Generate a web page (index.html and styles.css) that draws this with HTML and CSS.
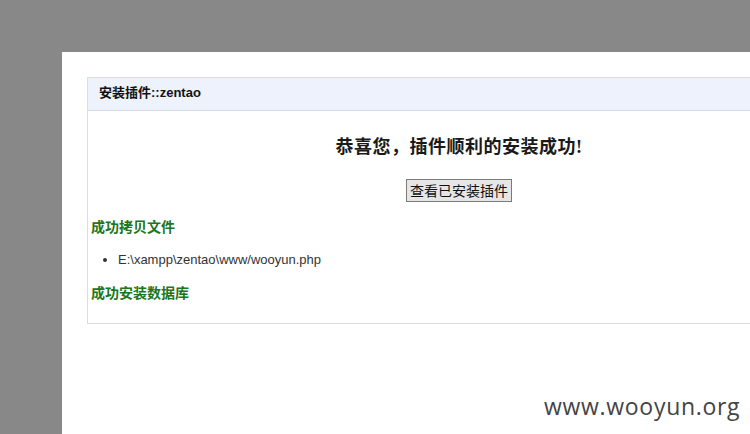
FILE: index.html
```html
<!DOCTYPE html>
<html>
<head>
<meta charset="utf-8">
<link rel="stylesheet" href="styles.css">
</head>
<body>
<div class="page">
  <div class="box">
    <div class="box-head">安装插件::zentao</div>
    <div class="box-body">
      <h3 class="title">恭喜您，插件顺利的安装成功!</h3>
      <div class="actions"><button class="btn">查看已安装插件</button></div>
      <h4 class="ok">成功拷贝文件</h4>
      <ul class="files">
        <li>E:\xampp\zentao\www/wooyun.php</li>
      </ul>
      <h4 class="ok">成功安装数据库</h4>
    </div>
  </div>
</div>
<div class="watermark">www.wooyun.org</div>
</body>
</html>
```

FILE: styles.css
```css
html, body {
  margin: 0;
  padding: 0;
  height: 100%;
  overflow: hidden;
}
body {
  background: #888888;
  font-family: "Liberation Sans", "Noto Sans CJK SC", sans-serif;
  color: #333;
}
.page {
  margin: 52px 0 0 62px;
  background: #fff;
  height: 382px;
  padding: 25px 0 0 25px;
  box-sizing: border-box;
  overflow: hidden;
}
.box {
  width: 742px;
  border: 1px solid #dcdcdc;
}
.box-head {
  height: 32px;
  line-height: 30px;
  padding-left: 11px;
  background: #edf2fc;
  border-bottom: 1px solid #d6dbe3;
  font-size: 13px;
  font-weight: bold;
  color: #111;
}
.box-body {
  padding: 0 3px 20px;
}
.title {
  margin: 24px 0 0;
  text-align: center;
  font-size: 18px;
  line-height: 24px;
  font-weight: bold;
  color: #1a1a1a;
  letter-spacing: 0.5px;
  font-family: "Liberation Serif", "Noto Sans CJK SC", serif;
}
.actions {
  text-align: center;
  margin-top: 20px;
}
.btn {
  font-family: "Noto Sans CJK SC", sans-serif;
  font-size: 14px;
  height: 23px;
  line-height: 19px;
  padding: 0 3px;
  background: #e6e6e6;
  border: 1px solid #7a7a7a;
  border-radius: 0;
  color: #111;
}
.ok {
  margin: 0;
  font-size: 14px;
  line-height: 20px;
  font-weight: bold;
  color: #207520;
}
.actions + .ok {
  margin-top: 15px;
}
.files {
  margin: 14px 0;
  padding-left: 27px;
  font-size: 13px;
  line-height: 18px;
  color: #333;
}
.watermark {
  position: absolute;
  left: 544px;
  top: 390px;
  font-family: "Open Sans", sans-serif;
  font-size: 23px;
  color: #444;
  letter-spacing: 0.7px;
}
```
